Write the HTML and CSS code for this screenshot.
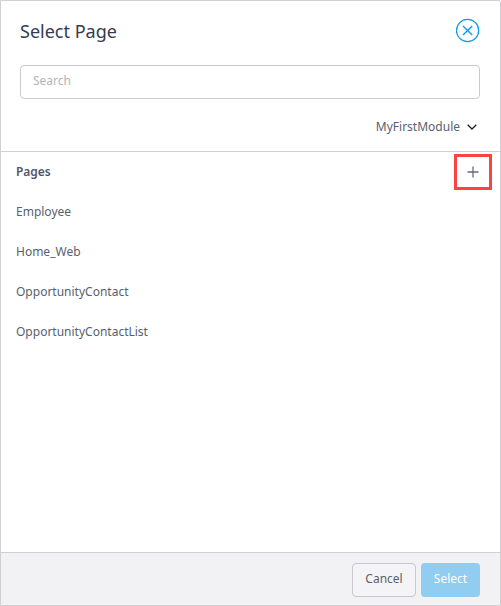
FILE: index.html
```html
<!DOCTYPE html>
<html lang="en">
<head>
<meta charset="utf-8">
<title>Select Page</title>
<link rel="stylesheet" href="styles.css">
</head>
<body>
<div class="dialog">
  <header class="header">
    <div class="title-row">
      <h1 class="title">Select Page</h1>
      <button class="close" aria-label="Close">
        <svg width="24" height="25" viewBox="0 0 24 25" fill="none" stroke="#0d9cec"><circle cx="11.6" cy="12.5" r="11.1" stroke-width="1.3"/><path d="M7 7.9l9.2 9.2M16.2 7.9L7 17.1" stroke-width="1.4"/></svg>
      </button>
    </div>
    <input class="search" type="text" placeholder="Search">
    <div class="module">
      <span>MyFirstModule</span>
      <svg width="10" height="6" viewBox="0 0 10 6" fill="none" stroke="#1c1f2b" stroke-width="1.3"><path d="M.7.7L5 5 9.3.7"/></svg>
    </div>
  </header>
  <main class="content">
    <div class="section">
      <h2 class="section-title">Pages</h2>
      <button class="add" aria-label="Add page">
        <svg width="12" height="12" viewBox="0 0 12 12" stroke="#666b78" stroke-width="1.3"><path d="M6 .5v11M.5 6h11"/></svg>
      </button>
    </div>
    <ul class="list">
      <li>Employee</li>
      <li>Home_Web</li>
      <li>OpportunityContact</li>
      <li>OpportunityContactList</li>
    </ul>
  </main>
  <footer class="footer">
    <button class="btn cancel">Cancel</button>
    <button class="btn select">Select</button>
  </footer>
</div>
</body>
</html>
```
FILE: styles.css
```css
* { box-sizing: border-box; }
body {
  margin: 0;
  background: #fff;
  font: 12px/20px "Noto Sans", sans-serif;
  color: #5a5f6d;
}
button { font: inherit; padding: 0; cursor: pointer; }
svg { display: block; }
.dialog {
  width: 501px;
  height: 606px;
  border: 1px solid #d0d0d2;
  border-radius: 0 2px 0 0;
  display: flex;
  flex-direction: column;
}
.header {
  height: 151px;
  padding: 17px 20px 0 19px;
  border-bottom: 1px solid #cfd0d3;
}
.title-row {
  display: flex;
  justify-content: space-between;
  height: 47px;
}
.title {
  margin: 0;
  font-size: 18px;
  line-height: 26px;
  font-weight: 400;
  color: #353b50;
}
.close {
  width: 24px;
  height: 25px;
  border: 0;
  background: none;
}
.search {
  display: block;
  width: 100%;
  height: 34px;
  padding: 0 12px 3px;
  border: 1px solid #cacbce;
  border-radius: 4px;
  font: inherit;
  color: inherit;
}
.search::placeholder { color: #b3b5bc; opacity: 1; }
.module {
  display: flex;
  align-items: center;
  justify-content: flex-end;
  gap: 7px;
  margin-top: 18px;
  padding-right: 3px;
}
.content { flex: 1; }
.section {
  display: flex;
  align-items: center;
  justify-content: space-between;
  height: 40px;
  padding: 0 8px 0 15px;
}
.section-title {
  margin: 0;
  font-size: 12px;
  font-weight: 600;
  letter-spacing: -0.05px;
  color: #515768;
}
.add {
  display: flex;
  align-items: center;
  justify-content: center;
  width: 38px;
  height: 36px;
  border: 3px solid #fa4343;
  background: none;
}
.list { margin: 0; padding: 0; list-style: none; }
.list li { height: 40px; padding-left: 15px; line-height: 40px; }
.footer {
  display: flex;
  justify-content: flex-end;
  gap: 5px;
  height: 53px;
  padding: 10px 20px 0;
  border-top: 1px solid #cfd0d3;
  background: #f2f2f4;
}
.btn { height: 34px; border-radius: 4px; padding-bottom: 2px; }
.cancel {
  width: 64px;
  border: 1px solid #c8c9cd;
  background: #f4f4f6;
  color: #5a5f6d;
}
.select {
  width: 59px;
  border: 0;
  background: #90cdf0;
  color: #fff;
}
```
